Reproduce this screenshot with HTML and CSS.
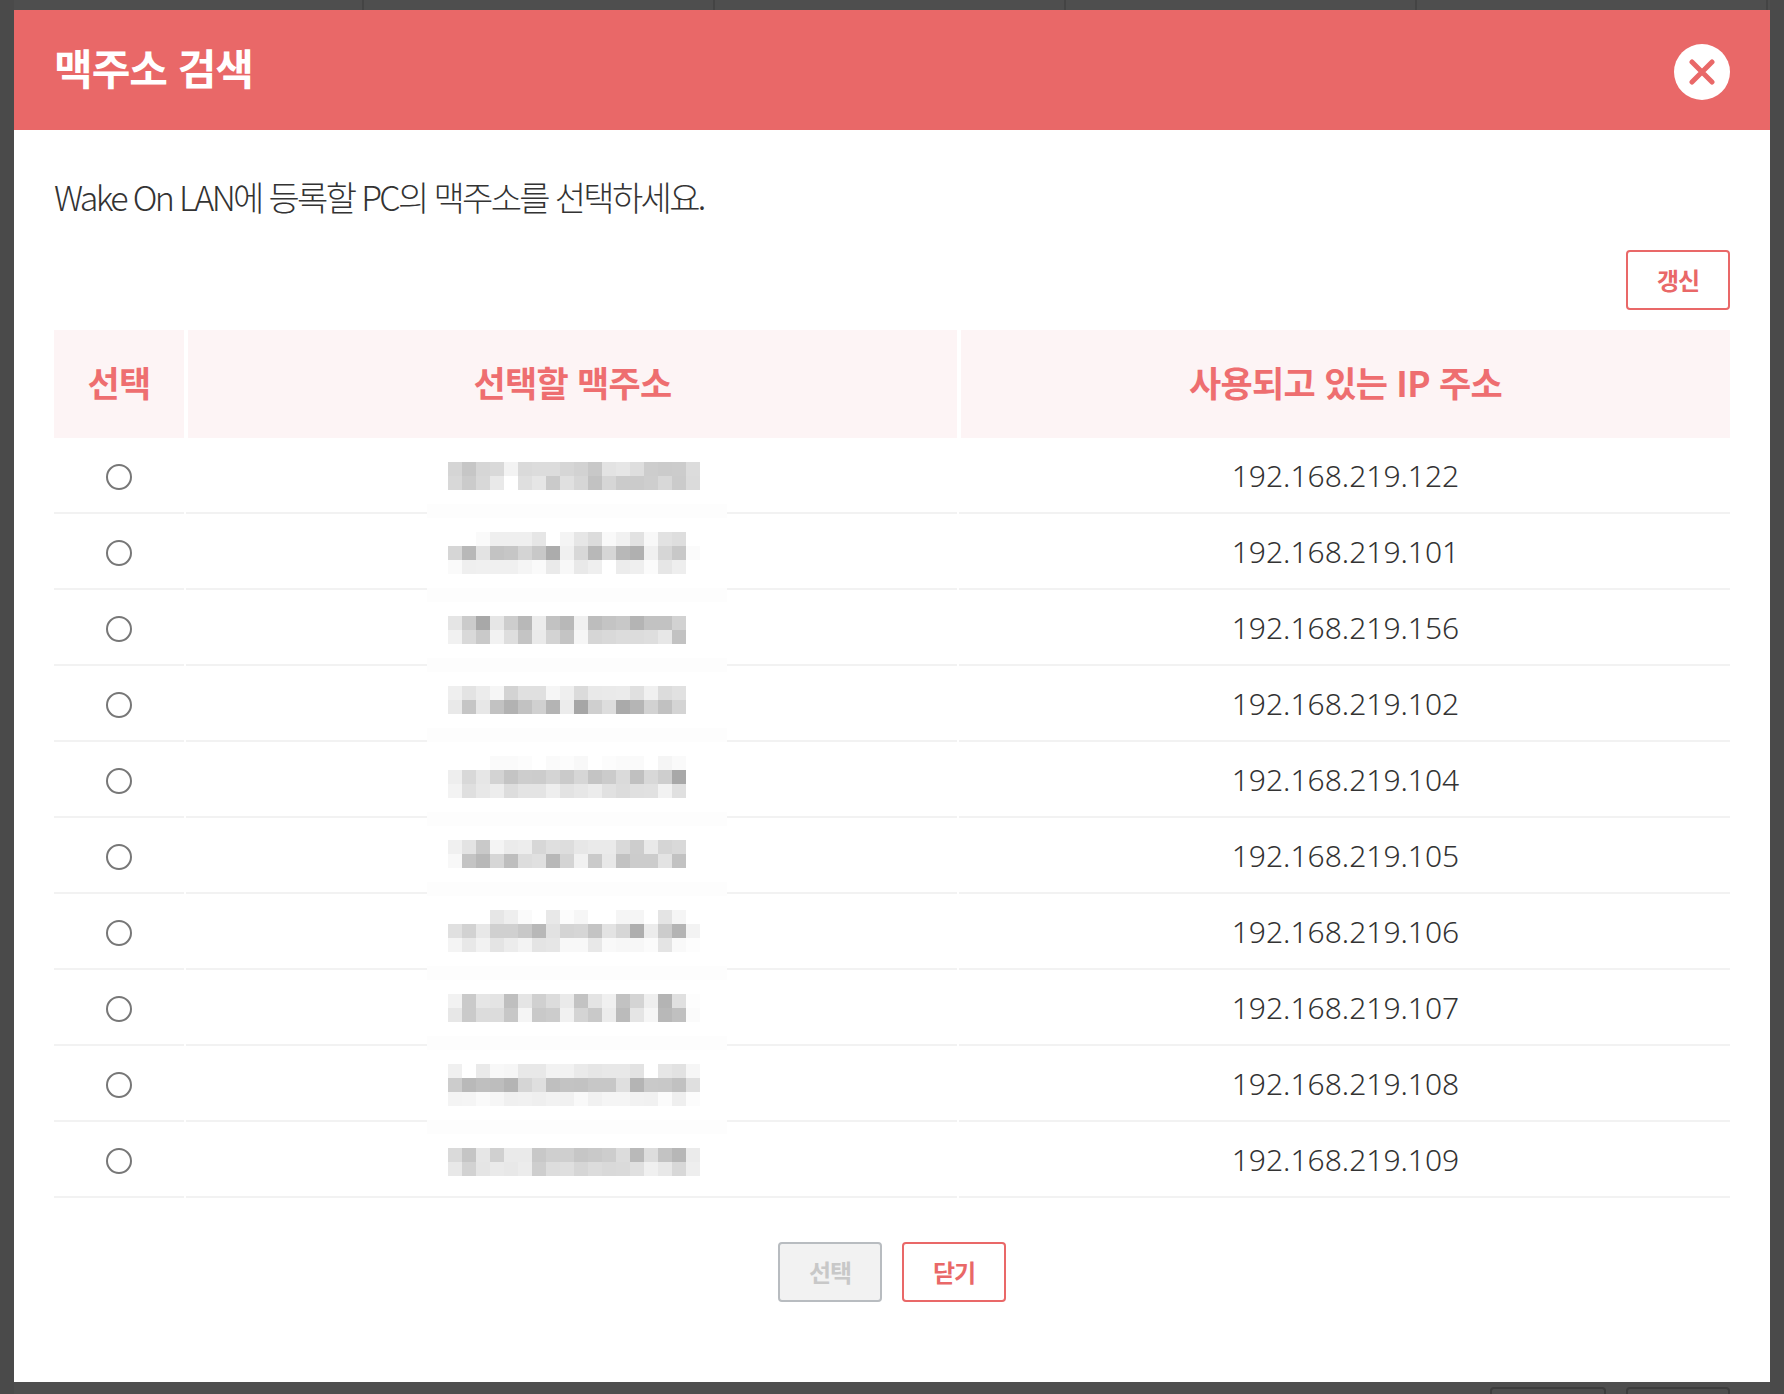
FILE: index.html
```html
<!DOCTYPE html>
<html lang="ko">
<head>
    <meta charset="UTF-8">
    <meta name="viewport" content="width=device-width, initial-scale=1.0">
    <title>맥주소 검색</title>
    <link rel="stylesheet" href="styles.css">
</head>
<body>
    <div class="behind-top">
        <span></span><span></span><span></span><span></span><span></span>
    </div>

    <div class="modal">
        <div class="modal-header">
            <h1>맥주소 검색</h1>
            <button type="button" class="close-btn" aria-label="닫기">
                <svg width="26" height="26" viewBox="0 0 26 26">
                    <path d="M3 3 L23 23 M23 3 L3 23" fill="none" stroke="#e96868" stroke-width="5" stroke-linecap="round"/>
                </svg>
            </button>
        </div>

        <div class="modal-body">
            <p class="desc">Wake On LAN에 등록할 PC의 맥주소를 선택하세요.</p>
            <div class="refresh-row">
                <button type="button" class="btn">갱신</button>
            </div>

            <div class="table-wrap">
                <table class="mac-table">
                    <thead>
                        <tr>
                            <th class="col-select">선택</th>
                            <th class="col-mac">선택할 맥주소</th>
                            <th>사용되고 있는 IP 주소</th>
                        </tr>
                    </thead>
                    <tbody>
                        <tr><td><input type="radio" name="mac"></td><td></td><td>192.168.219.122</td></tr>
                        <tr><td><input type="radio" name="mac"></td><td></td><td>192.168.219.101</td></tr>
                        <tr><td><input type="radio" name="mac"></td><td></td><td>192.168.219.156</td></tr>
                        <tr><td><input type="radio" name="mac"></td><td></td><td>192.168.219.102</td></tr>
                        <tr><td><input type="radio" name="mac"></td><td></td><td>192.168.219.104</td></tr>
                        <tr><td><input type="radio" name="mac"></td><td></td><td>192.168.219.105</td></tr>
                        <tr><td><input type="radio" name="mac"></td><td></td><td>192.168.219.106</td></tr>
                        <tr><td><input type="radio" name="mac"></td><td></td><td>192.168.219.107</td></tr>
                        <tr><td><input type="radio" name="mac"></td><td></td><td>192.168.219.108</td></tr>
                        <tr><td><input type="radio" name="mac"></td><td></td><td>192.168.219.109</td></tr>
                    </tbody>
                </table>
                <svg id="mosaic" class="mosaic" width="300" height="714" viewBox="0 0 300 714" shape-rendering="crispEdges"></svg>
            </div>

            <div class="modal-actions">
                <button type="button" class="btn btn-disabled">선택</button>
                <button type="button" class="btn">닫기</button>
            </div>
        </div>
    </div>

    <div class="behind-bottom">
        <span></span><span></span>
    </div>

    <script src="script.js"></script>
</body>
</html>
```

FILE: styles.css
```css
* {
    box-sizing: border-box;
}
html, body {
    height: 100%;
}
body {
    margin: 0;
    overflow: hidden;
    display: flex;
    flex-direction: column;
    background-color: #4a4a4a;
    font-family: "Noto Sans CJK KR", "Noto Sans", sans-serif;
    color: #333;
}
button {
    font-family: inherit;
    cursor: pointer;
}

/* page showing through the dimmed layer */
.behind-top {
    flex: none;
    height: 10px;
    margin: 0 14px;
    display: grid;
    grid-template-columns: 350px repeat(4, 351px);
    background-color: #4e4e4e;
}
.behind-top span {
    border-right: 2px solid #444;
}
.behind-bottom {
    flex: 1;
    min-height: 0;
    margin: 0 14px;
    padding: 5px 40px 0 0;
    overflow: hidden;
    display: flex;
    justify-content: flex-end;
    gap: 20px;
    background-color: #4e4e4e;
}
.behind-bottom span {
    flex: none;
    height: 40px;
    border: 2px solid #3d3d3d;
    border-radius: 4px;
}
.behind-bottom span:first-child {
    width: 116px;
}
.behind-bottom span:last-child {
    width: 104px;
}

.modal {
    flex: none;
    height: 1372px;
    margin: 0 14px;
    background: white;
}
.modal-header {
    height: 120px;
    padding: 0 40px;
    display: flex;
    align-items: center;
    justify-content: space-between;
    background-color: #e96868;
}
.modal-header h1 {
    margin: 0 0 8px;
    color: white;
    font-size: 42px;
    font-weight: 700;
    letter-spacing: -1px;
}
.close-btn {
    width: 56px;
    height: 56px;
    margin-top: 4px;
    padding: 0;
    border: none;
    border-radius: 50%;
    background: white;
    display: flex;
    align-items: center;
    justify-content: center;
}

.modal-body {
    padding: 0 40px;
}
.desc {
    height: 120px;
    margin: 0;
    padding-top: 41px;
    font-size: 34px;
    line-height: 52px;
    font-weight: 300;
    letter-spacing: -2.67px;
}
.refresh-row {
    display: flex;
    justify-content: flex-end;
    margin-bottom: 20px;
}
.btn {
    width: 104px;
    height: 60px;
    padding: 0 0 2px;
    border: 2px solid #e96868;
    border-radius: 4px;
    background: white;
    color: #e96868;
    font-size: 24px;
    font-weight: 700;
    letter-spacing: -1px;
}
.btn-disabled {
    border-color: #b8bcc0;
    background-color: #f2f2f2;
    color: #c8c8c8;
}

.table-wrap {
    position: relative;
}
.mac-table {
    width: calc(100% + 8px);
    margin: 0 -4px;
    table-layout: fixed;
    border-collapse: separate;
    border-spacing: 4px 0;
}
.mac-table th {
    height: 108px;
    padding: 0 0 6px;
    background-color: #fdf4f5;
    color: #ee6e70;
    font-size: 35px;
    font-weight: 700;
    letter-spacing: -0.7px;
}
.col-select {
    width: 130px;
}
.col-mac {
    width: 769px;
}
.mac-table td {
    position: relative;
    height: 76px;
    padding: 0;
    border-bottom: 2px solid #f2f2f2;
    text-align: center;
    font-family: "Noto Sans", sans-serif;
    font-size: 30px;
    font-weight: 300;
}
/* row lines run closer together than the header cells */
.mac-table td + td::before {
    content: "";
    position: absolute;
    left: -2px;
    bottom: -2px;
    width: 2px;
    height: 2px;
    background-color: #f2f2f2;
}
.mac-table input[type="radio"] {
    appearance: none;
    display: block;
    width: 26px;
    height: 26px;
    margin: 4px auto 0;
    border: 2px solid #777;
    border-radius: 50%;
    background: white;
}
/* mosaic hiding the real addresses */
.mosaic {
    position: absolute;
    left: 373px;
    top: 132px;
}

.modal-actions {
    display: flex;
    justify-content: center;
    gap: 20px;
    margin-top: 44px;
}
```

FILE: script.js
```js
// rows of the mosaic: y offset from the top of the svg, then one grey per 14px cell
const cells = [
    [0, 'd5 c6 d6 d9 f3 da dc dc d6 d2 c8 e3 e6 de cd cb cc dc'],
    [14, 'd8 cb d8 e9 ff df e6 ca e0 d6 c2 d6 cb cb ce d8 cb db'],
    [70, 'ff ff fa ef ef ef e6 ff f4 e6 dc f9 f1 e2 f8 e2 de ff'],
    [84, 'd6 b8 e3 c3 c6 d4 c8 ac f0 d8 b8 d6 b8 b0 f0 d6 c8 fb'],
    [98, 'fa ef f0 f0 f0 f5 fa ea f8 e9 ef ff ec ef fb e6 ee ff'],
    [154, 'e5 cb a8 e6 cd b8 ec c2 b8 f0 bd c4 c8 b4 c2 c2 d2 ff'],
    [168, 'f1 d9 c9 f2 de c4 ea d3 c4 f6 d6 d9 dc dc de e7 c2 ff'],
    [224, 'ef e3 ec f6 d3 e0 e0 f6 ef db e9 ea eb e0 f0 dc e1 ff'],
    [238, 'e9 c5 e7 c2 b2 c2 d0 b4 ec a6 cf dd aa b5 d2 c1 d4 ff'],
    [294, 'ff ff ff fa fa fc ff fa fc f8 ff fc fa fa ff f5 fa ff'],
    [308, 'ee d8 e6 d3 c4 cd cc d4 ca d6 c4 cb da c0 d8 ce a8 ff'],
    [322, 'f3 df e8 ed dd e4 e4 ee e3 e7 ec e1 dc e0 e1 f2 e0 ff'],
    [378, 'f0 e3 c9 f4 eb ed d7 df dd e7 ea ea d9 cd e9 d5 d9 ff'],
    [392, 'f8 c4 b8 d6 be dd e0 b8 d4 f1 ca e8 c2 cc cc e3 c2 ff'],
    [448, 'ff ff ff e6 ee fa ff e8 fc f6 ff ff f5 f5 ff e4 f5 ff'],
    [462, 'e0 d2 e8 d0 d0 c8 b8 e2 d4 d6 c4 e3 d6 ae ec cc b4 f3'],
    [476, 'f4 e8 f2 e4 ec f3 e4 e6 f8 f8 e8 f9 f7 f7 fb e4 f9 fd'],
    [532, 'f2 ca e6 e4 bf e5 d0 dc ea c3 e4 f0 c2 d4 ef b4 e0 fd'],
    [546, 'e7 ca dc dc c7 f5 c9 cc f1 d4 c9 ec bb e5 f6 b8 c0 fb'],
    [602, 'f0 ff ea f8 f6 e8 e8 f2 f2 ea e6 e8 e8 e3 ff e6 e2 f6'],
    [616, 'cc b9 bf bd b4 d5 df bf c3 c2 c7 c7 df b4 c9 c8 c1 df'],
    [630, 'f4 f5 fa f6 f0 f1 ef f2 f1 f9 f1 f5 f5 f2 f1 fb ef fc'],
    [686, 'da c5 e6 d0 ea ea c8 cf cf c6 c9 cd dc b9 dd c3 b7 eb'],
    [700, 'e8 d2 e5 ea e8 ec ce dd df d6 dc d9 da e0 f0 e8 d8 ee']
];

// pale bands of the mosaic that break the row lines
const bands = [42, 126, 196, 266, 350, 420, 504, 574, 658];

const mosaic = document.getElementById('mosaic');

function addRect(x, y, width, height, fill) {
    const rect = document.createElementNS('http://www.w3.org/2000/svg', 'rect');
    rect.setAttribute('x', x);
    rect.setAttribute('y', y);
    rect.setAttribute('width', width);
    rect.setAttribute('height', height);
    rect.setAttribute('fill', fill);
    mosaic.appendChild(rect);
}

bands.forEach(function(y) {
    addRect(0, y, 300, 14, '#fdfdfd');
});

cells.forEach(function(row) {
    row[1].split(' ').forEach(function(grey, i) {
        if (grey !== 'ff') {
            addRect(21 + i * 14, row[0], 14, 14, '#' + grey + grey + grey);
        }
    });
});
```
